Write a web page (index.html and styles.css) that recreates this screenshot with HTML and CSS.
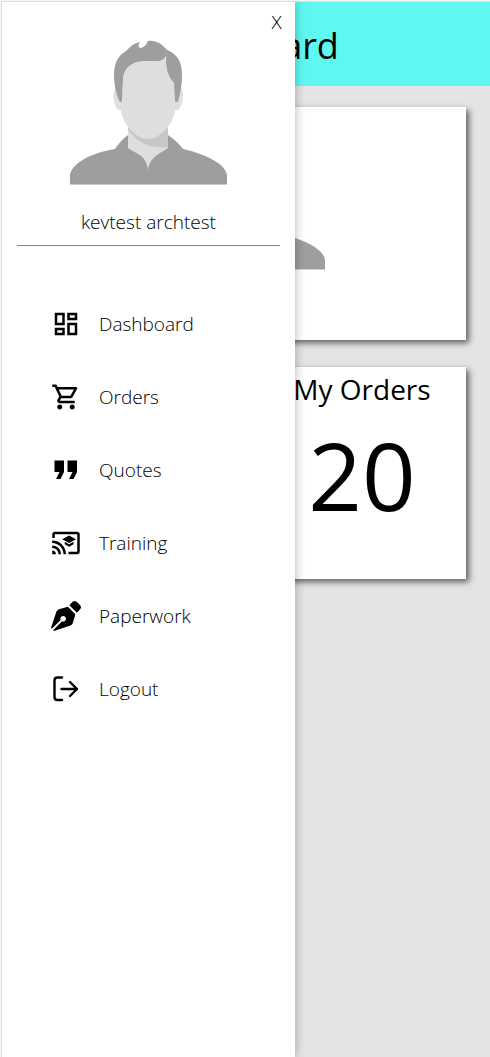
FILE: index.html
```html
<!DOCTYPE html>
<html lang="en">
<head>
<meta charset="utf-8">
<meta name="viewport" content="width=device-width, initial-scale=1">
<title>Dashboard</title>
<link rel="stylesheet" href="styles.css">
</head>
<body>
<svg class="sprite" aria-hidden="true">
  <symbol id="avatar" viewBox="70 40 157 145">
    <path fill="#dedede" d="M128 125h40v24l-20 24-20-24z"/>
    <path fill="#c8c6c7" d="M128 128L168 126V147Q143 150 128 130z"/>
    <path fill="#dedede" d="M116 87C112 92 113 107 119 110Q120 111 121 110C123 126 137 139 148 139S173 126 175 110Q176 111 178 110C184 105 184 91 181 87L176 58H120z"/>
    <path fill="#9e9e9e" d="M120 102C116 95 114 83 114 75C114 62 119 55 126 51Q133 43 140 42Q137 46 140 48Q145 48 148 41C156 40 162 44 167 50C178 54 182 63 182 75Q182 88 178 101Q177 103 175 101L174 83Q165 74 166 56C163 62 157 61 145 61C130 61 123 70 123 80Q122 91 122 100Q121 103 120 102z"/>
    <path fill="#9e9e9e" d="M70 184.500V175C72 163 91 153 115 149Q121 140 128 135V148C138 155 146 155 148 170C150 157 158 155 168 148V135Q177 141 183 149C205 154 226 164 227 175V184.500z"/>
  </symbol>
</svg>

<div class="app">
  <header class="topbar"><h1 class="topbar-title">Dashboard</h1></header>
  <main class="cards">
    <section class="card card-wide" aria-label="Profile">
      <svg class="avatar" aria-hidden="true"><use href="#avatar"/></svg>
    </section>
    <section class="card card-stat">
      <h2 class="card-title">My Orders</h2>
      <p class="card-value">20</p>
    </section>
  </main>

  <aside class="drawer">
    <button class="close" type="button" aria-label="Close menu">X</button>
    <div class="profile">
      <svg class="avatar" role="img" aria-label="User photo"><use href="#avatar"/></svg>
      <p class="profile-name">kevtest archtest</p>
    </div>
    <nav class="menu">
      <a class="menu-item" href="#dashboard">
        <svg class="icon" viewBox="0 0 24 24"><path d="M19 5v2h-4V5h4M9 5v6H5V5h4m10 8v6h-4v-6h4M9 17v2H5v-2h4M21 3h-8v6h8V3zM11 3H3v10h8V3zm10 8h-8v10h8V11zm-10 4H3v6h8v-6z"/></svg>
        <span>Dashboard</span>
      </a>
      <a class="menu-item" href="#orders">
        <svg class="icon" viewBox="0 0 24 24"><path d="M15.55 13c.75 0 1.41-.41 1.75-1.03l3.58-6.49c.37-.66-.11-1.48-.87-1.48H5.21l-.94-2H1v2h2l3.6 7.59-1.35 2.44C4.52 15.37 5.48 17 7 17h12v-2H7l1.1-2h7.45zM6.16 6h12.15l-2.76 5H8.53L6.16 6zM7 18c-1.1 0-1.99.9-1.99 2S5.9 22 7 22s2-.9 2-2-.9-2-2-2zm10 0c-1.1 0-1.99.9-1.99 2s.89 2 1.99 2 2-.9 2-2-.9-2-2-2z"/></svg>
        <span>Orders</span>
      </a>
      <a class="menu-item" href="#quotes">
        <svg class="icon" viewBox="0 0 30 30"><path d="M3.5 5.500h9.500v11.500l-3.500 7h-4.500l3.500-7h-5zM16.500 5.500h9.500v11.500l-3.500 7h-4.500l3.500-7h-5z"/></svg>
        <span>Quotes</span>
      </a>
      <a class="menu-item" href="#training">
        <svg class="icon" viewBox="0 0 24 24"><path d="M21 3H3c-1.100 0-2 .9-2 2v3h2V5h18v14h-7v2h7c1.100 0 2-.9 2-2V5c0-1.100-.9-2-2-2zM1 18v3h3c0-1.660-1.340-3-3-3zm0-4v2c2.760 0 5 2.240 5 5h2c0-3.870-3.130-7-7-7zm0-4v2c4.970 0 9 4.030 9 9h2c0-6.080-4.930-11-11-11zm10 1.090v2L14.500 15l3.500-1.910v-2L14.500 13 11 11.090zM14.500 6L9 9l5.500 3L20 9l-5.500-3z"/></svg>
        <span>Training</span>
      </a>
      <a class="menu-item" href="#paperwork">
        <svg class="icon" viewBox="0 0 512 512"><path d="M136.600 138.790a64.003 64.003 0 0 0-43.310 41.350L0 460l14.690 14.690L164.800 324.580c-2.990-6.260-4.800-13.180-4.800-20.580 0-26.510 21.490-48 48-48s48 21.490 48 48-21.490 48-48 48c-7.400 0-14.320-1.810-20.580-4.800L37.310 497.310 52 512l279.860-93.290a64.003 64.003 0 0 0 41.350-43.310L416 224 288 96l-151.400 42.790zm361.340-64.620l-60.110-60.110c-18.750-18.750-49.160-18.750-67.910 0l-56.550 56.550 128.020 128.020 56.550-56.550c18.750-18.750 18.750-49.150 0-67.910z"/></svg>
        <span>Paperwork</span>
      </a>
      <a class="menu-item" href="#logout">
        <svg class="icon icon-line" viewBox="0 0 30 30"><path d="M11 3.500H6.500Q3.500 3.500 3.500 6.500V23Q3.500 26 6.500 26H11M10.500 15H26M19 8l7 7-7 7"/></svg>
        <span>Logout</span>
      </a>
    </nav>
  </aside>
</div>
</body>
</html>
```
FILE: styles.css
```css
* {
  box-sizing: border-box;
}

body {
  margin: 0;
  background: #f6f6f6;
  color: #000;
  font-family: "Segoe UI", "Open Sans", "Noto Sans", sans-serif;
}

h1, h2, p {
  margin: 0;
  font-weight: inherit;
}

.sprite {
  position: absolute;
  width: 0;
  height: 0;
}

.app {
  position: relative;
  min-height: calc(100vh - 1px);
  margin: 1px 0 0 1px;
  border: 1px solid #dcdcdc;
  border-width: 1px 0 0 1px;
  background: #e4e4e4;
}

.topbar {
  display: flex;
  align-items: center;
  justify-content: center;
  height: 84px;
  padding-top: 4px;
  background: #5ff7f1;
}

.topbar-title {
  font-size: 36px;
  line-height: 48px;
}

.cards {
  display: grid;
  grid-template-columns: 1fr 1fr;
  gap: 27px 24px;
  padding: 21px 24px;
}

.card {
  display: flex;
  flex-direction: column;
  align-items: center;
  background: #fff;
  box-shadow: 3px 3px 6px #606060;
}

.card-wide {
  grid-column: 1 / -1;
  justify-content: flex-end;
  min-height: 233px;
  padding-bottom: 70px;
}

.card-stat {
  grid-column: 2;
  min-height: 212px;
}

.card-title {
  padding-top: 2px;
  font-size: 28px;
  line-height: 40px;
}

.card-value {
  font-size: 94px;
  line-height: 132px;
}

.avatar {
  display: block;
  width: 157px;
  height: 145px;
}

.drawer {
  position: absolute;
  top: 0;
  bottom: 0;
  left: 0;
  width: 60%;
  max-width: 293px;
  padding: 0 15px;
  background: #fff;
  box-shadow: 0 0 10px rgba(0, 0, 0, 0.3);
  clip-path: inset(0 -16px 0 0);
  color: #000;
  font-size: 19px;
  font-weight: 300;
  line-height: 24px;
}

.close {
  display: block;
  margin: 0 -2px 0 auto;
  padding: 8px 0 6px;
  border: 0;
  background: none;
  color: inherit;
  font: inherit;
  cursor: pointer;
}

.profile {
  display: flex;
  flex-direction: column;
  align-items: center;
  gap: 25px;
  padding-bottom: 11px;
  border-bottom: 1px solid #808080;
}

.menu {
  display: flex;
  flex-direction: column;
  padding: 41px 0 0 34px;
}

.menu-item {
  display: flex;
  align-items: center;
  gap: 18px;
  height: 73px;
  color: inherit;
  text-decoration: none;
}

.icon {
  width: 30px;
  height: 30px;
  fill: #000;
}

.icon-line {
  fill: none;
  stroke: #000;
  stroke-width: 2.4;
  stroke-linecap: round;
  stroke-linejoin: round;
}
```
